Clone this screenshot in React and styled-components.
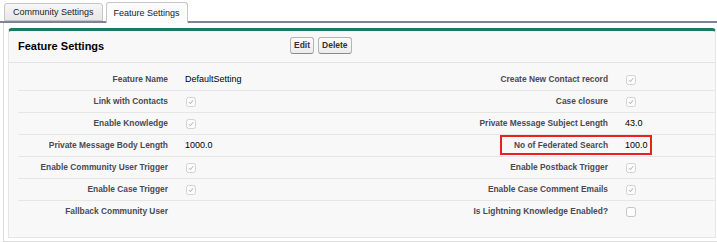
import React from "react";
import styled, { createGlobalStyle } from "styled-components";

const GlobalStyle = createGlobalStyle`
  html, body {
    margin: 0;
    padding: 0;
    background: #ffffff;
  }
  body {
    font-family: "Liberation Sans", Arial, Helvetica, sans-serif;
    width: 717px;
    overflow: hidden;
  }
`;

// Row data: [label, value] pairs for the left and right columns
const rows = [
  {
    left: { label: "Feature Name", value: "DefaultSetting" },
    right: { label: "Create New Contact record", check: true },
  },
  {
    left: { label: "Link with Contacts", check: true },
    right: { label: "Case closure", check: true },
  },
  {
    left: { label: "Enable Knowledge", check: true },
    right: { label: "Private Message Subject Length", value: "43.0" },
  },
  {
    left: { label: "Private Message Body Length", value: "1000.0" },
    right: { label: "No of Federated Search", value: "100.0", highlight: true },
  },
  {
    left: { label: "Enable Community User Trigger", check: true },
    right: { label: "Enable Postback Trigger", check: true },
  },
  {
    left: { label: "Enable Case Trigger", check: true },
    right: { label: "Enable Case Comment Emails", check: true },
  },
  {
    left: { label: "Fallback Community User", value: "" },
    right: { label: "Is Lightning Knowledge Enabled?", check: false },
  },
];

const Page = styled.div`
  width: 717px;
  height: 242px;
  overflow: hidden;
`;

const TabBar = styled.div`
  display: flex;
  align-items: flex-end;
  gap: 3px;
  height: 21px;
  padding-left: 4px;
  border-bottom: 2px solid #7d8498;
`;

const Tab = styled.div`
  display: flex;
  align-items: center;
  padding: 0 ${(p) => (p.$active ? "7px" : "8px")};
  height: ${(p) => (p.$active ? "21px" : "18px")};
  margin-bottom: ${(p) => (p.$active ? "-2px" : "0")};
  border: 1px solid #c6c6c6;
  border-bottom: ${(p) => (p.$active ? "none" : "1px solid #c6c6c6")};
  border-radius: 3px 3px 0 0;
  background: ${(p) =>
    p.$active ? "#fbfbfb" : "linear-gradient(#f6f6f6, #e7e7e7)"};
  color: #222;
  font-size: 9px;
  box-sizing: border-box;
`;

const Content = styled.div`
  margin-left: 3px;
  padding: 5px 1px 3px 4px;
  border-left: 1px solid #dcdcdc;
  border-bottom: 1px solid #dcdcdc;
`;

const Panel = styled.div`
  background: #f8f8f8;
  border: 1px solid #e6e6e6;
  border-top: 3px solid #1b7a64;
  border-radius: 4px 4px 0 0;
`;

const PanelHeader = styled.div`
  display: flex;
  align-items: center;
  height: 32px;
  padding: 0 0 2px 9px;
  box-sizing: border-box;
  border-bottom: 1px solid #e3e3e3;
`;

const Title = styled.h2`
  flex: 0 0 272px;
  margin: 0;
  font-size: 11px;
  font-weight: bold;
  color: #000;
`;

const ButtonGroup = styled.div`
  display: flex;
  gap: 4px;
`;

const Button = styled.button`
  height: 17px;
  padding: 0 3px;
  border: 1px solid #b5b5b5;
  border-bottom-color: #8c8c8c;
  border-radius: 3px;
  background: linear-gradient(#fdfdfd, #ececec);
  color: #333;
  font-family: inherit;
  font-size: 8.5px;
  font-weight: bold;
  line-height: 15px;
`;

const DetailList = styled.div`
  padding: 6px 0 14px 9px;
`;

const Row = styled.div`
  position: relative;
  display: grid;
  grid-template-columns: 158px 180px 260px 1fr;
  height: 22px;
  box-sizing: border-box;
  border-bottom: 1px solid ${(p) => (p.$last ? "transparent" : "#e6e6e6")};
`;

const Label = styled.div`
  padding: 5px 8px 0 2px;
  text-align: right;
  font-size: 8.4px;
  font-weight: bold;
  line-height: 11px;
  color: #4a4a56;
  white-space: nowrap;
`;

const Value = styled.div`
  padding: 5px 2px 0 9px;
  font-size: 9px;
  line-height: 11px;
  color: #000;
  white-space: nowrap;
`;

const CheckWrap = styled.div`
  padding: 6px 0 0 10px;
  line-height: 0;
`;

const Highlight = styled.div`
  position: absolute;
  left: 482px;
  top: 0;
  width: 152px;
  height: 20px;
  border: 2px solid #e8231b;
  box-sizing: border-box;
  pointer-events: none;
`;

const Checkbox = ({ checked }) => (
  <svg width="10" height="10" viewBox="0 0 10 10">
    <rect
      x="0.5"
      y="0.5"
      width="9"
      height="9"
      rx="2"
      fill="#fcfcfc"
      stroke={checked ? "#d3d3d3" : "#c4c4c4"}
    />
    {checked && (
      <path
        d="M3 5.2 L4.4 6.7 L7.1 3.2"
        fill="none"
        stroke="#9a9a9a"
        strokeWidth="0.8"
      />
    )}
  </svg>
);

const Cell = ({ item }) => (
  <>
    <Label>{item.label}</Label>
    {item.check !== undefined ? (
      <CheckWrap>
        <Checkbox checked={item.check} />
      </CheckWrap>
    ) : (
      <Value>{item.value}</Value>
    )}
  </>
);

const App = () => {
  return (
    <Page>
      <GlobalStyle />
      <TabBar>
        <Tab>Community Settings</Tab>
        <Tab $active>Feature Settings</Tab>
      </TabBar>
      <Content>
        <Panel>
          <PanelHeader>
            <Title>Feature Settings</Title>
            <ButtonGroup>
              <Button>Edit</Button>
              <Button>Delete</Button>
            </ButtonGroup>
          </PanelHeader>
          <DetailList>
            {rows.map((row, i) => (
              <Row key={row.left.label} $last={i === rows.length - 1}>
                <Cell item={row.left} />
                <Cell item={row.right} />
                {row.right.highlight && <Highlight />}
              </Row>
            ))}
          </DetailList>
        </Panel>
      </Content>
    </Page>
  );
};

export default App;
